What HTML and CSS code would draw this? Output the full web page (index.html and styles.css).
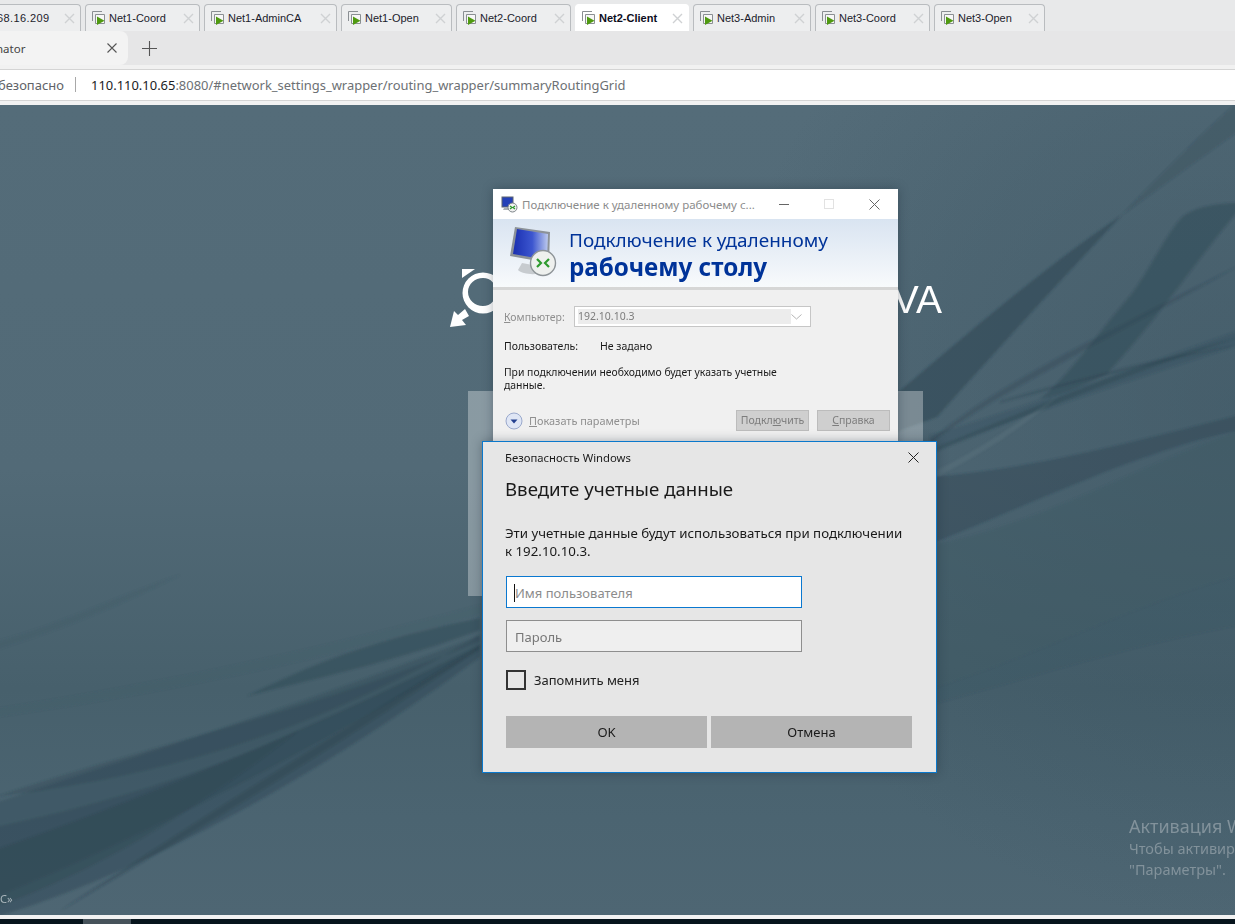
FILE: index.html
```html
<!DOCTYPE html>
<html lang="ru">
<head>
    <meta charset="UTF-8">
    <meta name="viewport" content="width=device-width, initial-scale=1.0">
    <title>Net2-Client</title>
    <link rel="stylesheet" href="styles.css">
</head>
<body>
    <svg width="0" height="0" class="defs">
        <defs>
            <g id="vm-icon">
                <path d="M1.5 11V1.5H11" fill="none" stroke="#8a8f93"/>
                <path d="M4.5 13.5V4.5H13.5V13.5Z" fill="#f7f7f7" stroke="#8a8f93"/>
                <path d="M6 6.5V15L13.5 10.8Z" fill="#4f9a10"/>
            </g>
            <g id="x-icon">
                <path d="M1 1L10 10M10 1L1 10" fill="none" stroke="#cfd1d3" stroke-width="1.4"/>
            </g>
        </defs>
    </svg>

    <!-- Workstation tabs -->
    <div class="tabstrip">
        <div class="tab tab-cut"><span class="tab-label">68.16.209</span><svg class="tab-x" width="11" height="11"><use href="#x-icon"/></svg></div>
        <div class="tab"><svg class="vm" width="16" height="16"><use href="#vm-icon"/></svg><span class="tab-label">Net1-Coord</span><svg class="tab-x" width="11" height="11"><use href="#x-icon"/></svg></div>
        <div class="tab"><svg class="vm" width="16" height="16"><use href="#vm-icon"/></svg><span class="tab-label">Net1-AdminCA</span><svg class="tab-x" width="11" height="11"><use href="#x-icon"/></svg></div>
        <div class="tab"><svg class="vm" width="16" height="16"><use href="#vm-icon"/></svg><span class="tab-label">Net1-Open</span><svg class="tab-x" width="11" height="11"><use href="#x-icon"/></svg></div>
        <div class="tab"><svg class="vm" width="16" height="16"><use href="#vm-icon"/></svg><span class="tab-label">Net2-Coord</span><svg class="tab-x" width="11" height="11"><use href="#x-icon"/></svg></div>
        <div class="tab tab-active"><svg class="vm" width="16" height="16"><use href="#vm-icon"/></svg><span class="tab-label">Net2-Client</span><svg class="tab-x" width="11" height="11"><use href="#x-icon"/></svg></div>
        <div class="tab"><svg class="vm" width="16" height="16"><use href="#vm-icon"/></svg><span class="tab-label">Net3-Admin</span><svg class="tab-x" width="11" height="11"><use href="#x-icon"/></svg></div>
        <div class="tab"><svg class="vm" width="16" height="16"><use href="#vm-icon"/></svg><span class="tab-label">Net3-Coord</span><svg class="tab-x" width="11" height="11"><use href="#x-icon"/></svg></div>
        <div class="tab"><svg class="vm" width="16" height="16"><use href="#vm-icon"/></svg><span class="tab-label">Net3-Open</span><svg class="tab-x" width="11" height="11"><use href="#x-icon"/></svg></div>
    </div>

    <!-- Browser tabs and address bar -->
    <div class="browser-tabs">
        <div class="browser-tab">
            <span class="browser-tab-label">nator</span>
            <svg width="10" height="10"><path d="M0.5 0.5L9.5 9.5M9.5 0.5L0.5 9.5" fill="none" stroke="#555" stroke-width="1.1"/></svg>
        </div>
        <svg class="new-tab" width="15" height="15"><path d="M7.5 0V15M0 7.5H15" fill="none" stroke="#555" stroke-width="1.1"/></svg>
    </div>
    <div class="toolbar">
        <div class="address">
            <span class="insecure">безопасно</span>
            <span class="divider"></span>
            <span class="url">110.110.10.65<span class="url-rest">:8080/#network_settings_wrapper/routing_wrapper/summaryRoutingGrid</span></span>
        </div>
    </div>

    <!-- Remote desktop -->
    <div class="desktop">
        <svg class="wallpaper" width="1235" height="810" viewBox="0 0 1235 810">
            <defs>
                <linearGradient id="wall" x1="0" y1="0" x2="0" y2="1">
                    <stop offset="0" stop-color="#546c79"/>
                    <stop offset="0.45" stop-color="#526a77"/>
                    <stop offset="0.72" stop-color="#47606c"/>
                    <stop offset="0.88" stop-color="#4b6471"/>
                    <stop offset="1" stop-color="#4e6673"/>
                </linearGradient>
                <radialGradient id="right-glow" gradientUnits="userSpaceOnUse" cx="1235" cy="300" r="520">
                    <stop offset="0" stop-color="#324b58" stop-opacity="0.4"/>
                    <stop offset="0.6" stop-color="#324b58" stop-opacity="0.2"/>
                    <stop offset="1" stop-color="#324b58" stop-opacity="0"/>
                </radialGradient>
                <filter id="soft">
                    <feGaussianBlur stdDeviation="1"/>
                </filter>
            </defs>
            <rect width="1235" height="810" fill="url(#wall)"/>
            <rect width="1235" height="810" fill="url(#right-glow)"/>
            <g filter="url(#soft)">
                <!-- left fan -->
                <path d="M-5 537C60 520 120 490 180 470C120 500 60 525 -5 545Z" fill="#3f5966" opacity="0.3"/>
                <path d="M-5 604C150 580 300 550 480 500V510C300 560 150 590 -5 612Z" fill="#3f5966" opacity="0.18"/>
                <path d="M480 513C400 530 340 545 247 591C330 570 400 555 480 525Z" fill="#2b4350" opacity="0.4"/>
                <path d="M480 530C330 590 170 640 -5 698V792C150 730 320 640 480 545Z" fill="#2b4350" opacity="0.32"/>
                <path d="M480 540C340 610 180 680 -5 745V812C140 770 320 670 480 552Z" fill="#2b4350" opacity="0.38"/>
                <path d="M480 536C300 610 150 640 -5 692C150 672 300 635 480 530Z" fill="#2b4350" opacity="0.3"/>
                <path d="M300 625C200 670 100 700 -5 722V802C90 770 190 710 300 625Z" fill="#2b4350" opacity="0.3"/>
                <path d="M480 540C400 590 250 680 60 806C260 690 400 600 480 543Z" fill="#263d4a" opacity="0.3"/>
                <!-- right fan -->
                <path d="M930 440C1040 420 1140 360 1240 325V470C1130 500 1040 550 930 584Z" fill="#3f5865" opacity="0.35"/>
                <path d="M930 584C1040 550 1130 500 1240 470V520C1130 540 1040 570 930 600Z" fill="#324b58" opacity="0.15"/>
                <path d="M860 320C960 235 1040 165 1122 110C1075 160 1010 230 937 312L860 340Z" fill="#2b4350" opacity="0.5"/>
                <path d="M1122 110C1160 70 1200 30 1240 -5V25C1190 60 1150 90 1122 110Z" fill="#2b4350" opacity="0.25"/>
                <path d="M1040 294C1070 270 1100 225 1130 191C1150 165 1165 130 1183 111C1200 100 1220 98 1240 98V104C1200 150 1165 205 1107 269C1085 280 1060 290 1040 294Z" fill="#2b4350" opacity="0.4"/>
                <path d="M930 330C1000 310 1100 275 1240 225V240C1100 285 1000 320 930 345Z" fill="#2b4350" opacity="0.22"/>
                <path d="M930 372C1030 365 1140 335 1240 310V325C1140 345 1030 400 930 439Z" fill="#2b4350" opacity="0.42"/>
                <path d="M930 345C1040 300 1130 260 1240 232C1130 268 1040 305 930 349Z" fill="#2b4350" opacity="0.4"/>
                <path d="M1000 296C1090 270 1170 250 1240 240C1170 254 1090 274 1000 298Z" fill="#2b4350" opacity="0.35"/>
                <path d="M930 335C1000 280 1060 250 1240 160C1070 256 1000 286 930 339Z" fill="#2b4350" opacity="0.3"/>
                <path d="M937 365C980 345 1020 315 1060 290C1020 325 980 350 937 372Z" fill="#7d939d" opacity="0.14"/>
            </g>
        </svg>

        <div class="logo">
            <svg width="46" height="62" viewBox="0 0 46 62">
                <path d="M12 4H25L12 13Z" fill="#fff"/>
                <path fill-rule="evenodd" d="M33 7.5A20.5 20.5 0 1 0 33 48.5A20.5 20.5 0 1 0 33 7.5ZM33 13C25 13 18 19 18 27C18 35 25 41 33 41C41 41 46 35 46 27C46 19 41 13 33 13Z" fill="#fff"/>
                <path d="M0 62L4 46L8 50L15 44L19 51L12 55L16 60Z" fill="#fff"/>
            </svg>
            <span class="logo-text">VA</span>
        </div>
        <div class="login-panel"></div>

        <p class="footer-note">С»</p>
        <div class="activation">
            <p class="activation-title">Активация Windows</p>
            <p>Чтобы активировать Windows, перейдите в раздел</p>
            <p>"Параметры".</p>
        </div>

        <!-- RDP client window -->
        <div class="window rdp">
            <div class="rdp-title">
                <svg width="17" height="17" viewBox="0 0 17 17">
                    <rect x="1" y="1" width="11" height="10" fill="#2440b8" stroke="#5d6570"/>
                    <path d="M3 12H10L11 14H2Z" fill="#aab0b5"/>
                    <circle cx="11.5" cy="11.5" r="4.5" fill="#f0f0f0" stroke="#7c8388"/>
                    <path d="M9 10L11 11.5L9 13M14 10L12 11.5L14 13" fill="none" stroke="#2e9a2e" stroke-width="1.2"/>
                </svg>
                <span class="rdp-title-text">Подключение к удаленному рабочему с...</span>
                <svg class="rdp-ctrl" width="10" height="10"><path d="M0 5.5H10" stroke="#666"/></svg>
                <svg class="rdp-ctrl" width="10" height="10"><rect x="0.5" y="0.5" width="9" height="9" fill="none" stroke="#e2e2e2"/></svg>
                <svg class="rdp-ctrl" width="11" height="11"><path d="M0.5 0.5L10.5 10.5M10.5 0.5L0.5 10.5" fill="none" stroke="#666"/></svg>
            </div>
            <div class="rdp-banner">
                <svg class="rdp-monitor" width="50" height="52" viewBox="0 0 50 52">
                    <defs>
                        <linearGradient id="screen" x1="0" y1="0" x2="1" y2="0">
                            <stop offset="0" stop-color="#1a2fb0"/>
                            <stop offset="0.55" stop-color="#3c56cf"/>
                            <stop offset="1" stop-color="#bcc9ee"/>
                        </linearGradient>
                    </defs>
                    <path d="M7 1L42 6L41 37L2 30Z" fill="#8c9298"/>
                    <path d="M9 3L40 8L39 34L5 28Z" fill="url(#screen)"/>
                    <path d="M14 37L30 40L34 46C28 50 14 48 10 44Z" fill="#c7cbcf"/>
                    <circle cx="35" cy="37" r="12.5" fill="#eef0ee" stroke="#8e9498" stroke-width="1.4"/>
                    <path d="M29 33L33 37L29 41M41 33L37 37L41 41" fill="none" stroke="#2e9a2e" stroke-width="2.2"/>
                </svg>
                <div class="rdp-heading">
                    <div class="rdp-heading-top">Подключение к удаленному</div>
                    <div class="rdp-heading-bold">рабочему столу</div>
                </div>
            </div>
            <div class="rdp-body">
                <div class="rdp-row">
                    <span class="rdp-label"><u>К</u>омпьютер:</span>
                    <div class="rdp-combo">
                        <span class="rdp-combo-value">192.10.10.3</span>
                        <svg width="11" height="6"><path d="M0.5 0.5L5.5 5L10.5 0.5" fill="none" stroke="#b5b5b5"/></svg>
                    </div>
                </div>
                <div class="rdp-user"><span class="rdp-user-label">Пользователь:</span><span>Не задано</span></div>
                <p class="rdp-note">При подключении необходимо будет указать учетные<br>данные.</p>
                <div class="rdp-actions">
                    <svg class="rdp-more" width="18" height="18" viewBox="0 0 18 18">
                        <circle cx="9" cy="9" r="8" fill="#dfe6f5" stroke="#9aa9cc"/>
                        <path d="M5.5 7.5H12.5L9 11.5Z" fill="#24408f"/>
                    </svg>
                    <span class="rdp-options"><u>П</u>оказать параметры</span>
                    <span class="rdp-button rdp-connect">Подкл<u>ю</u>чить</span>
                    <span class="rdp-button"><u>С</u>правка</span>
                </div>
            </div>
        </div>

        <!-- Windows credentials dialog -->
        <div class="window creds">
            <div class="creds-title">
                <span>Безопасность Windows</span>
                <svg width="11" height="11"><path d="M0.5 0.5L10.5 10.5M10.5 0.5L0.5 10.5" fill="none" stroke="#222"/></svg>
            </div>
            <h1 class="creds-heading">Введите учетные данные</h1>
            <p class="creds-text">Эти учетные данные будут использоваться при подключении<br>к 192.10.10.3.</p>
            <div class="field field-focus"><span class="caret"></span>Имя пользователя</div>
            <div class="field">Пароль</div>
            <div class="remember"><span class="checkbox"></span>Запомнить меня</div>
            <div class="creds-buttons">
                <div class="creds-button">OK</div>
                <div class="creds-button">Отмена</div>
            </div>
        </div>
    </div>

    <!-- Bottom of the host screen -->
    <div class="host-strip"></div>
    <div class="host-taskbar"><span class="host-task"></span></div>
</body>
</html>
```

FILE: styles.css
```css
/* Basic resets */
* {
    margin: 0;
    padding: 0;
    box-sizing: border-box;
}

body {
    width: 1235px;
    height: 924px;
    display: flex;
    flex-direction: column;
    overflow: hidden;
    background: #f1f1f1;
    font-family: "Noto Sans", sans-serif;
}

.defs {
    position: absolute;
}

/* Workstation tabs */
.tabstrip {
    height: 31px;
    flex: none;
    display: grid;
    grid-template-columns: 81px 115px 133px 111px 115px 114px 118px 115px 111px;
    gap: 4px;
    padding-top: 4px;
    background: #e8e9ea;
    font-family: "Liberation Sans", sans-serif;
    font-size: 11px;
    color: #1c1c2c;
}

.tab {
    display: flex;
    align-items: center;
    padding: 0 5px 0 5px;
    background: #edeeef;
    border: 1px solid #b9bcbf;
    border-bottom: none;
    border-radius: 4px 4px 0 0;
}

.tab-cut {
    padding-left: 0;
    border-left: none;
    border-radius: 0 4px 0 0;
}

.tab-cut .tab-label {
    margin-left: -3px;
    letter-spacing: 0.4px;
}

.tab-active {
    background: #fff;
    border-color: #fff;
    font-weight: bold;
    color: #0c0c1c;
}

.vm {
    margin-right: 2px;
    flex: none;
}

.tab-x {
    margin-left: auto;
    flex: none;
}

/* Browser chrome */
.browser-tabs {
    height: 34px;
    flex: none;
    display: flex;
    align-items: center;
    background: #e6e6e7;
}

.browser-tab {
    width: 128px;
    height: 100%;
    display: flex;
    align-items: center;
    justify-content: space-between;
    padding-right: 11px;
    background: #f3f3f3;
    border-radius: 0 8px 8px 0;
    font-size: 11.5px;
    color: #444;
}

.browser-tab-label {
    margin-left: -4px;
}

.new-tab {
    margin-left: 14px;
}

.toolbar {
    height: 40px;
    flex: none;
    padding-top: 4px;
    background: #f1f1f1;
}

.address {
    height: 32px;
    display: flex;
    align-items: center;
    padding-bottom: 1px;
    background: #fff;
    border-top: 1px solid #d4d4d4;
    border-bottom: 1px solid #d4d4d4;
    font-size: 12.95px;
    white-space: nowrap;
}

.insecure {
    width: 77px;
    margin-left: -2px;
    color: #5f6368;
}

.divider {
    width: 1px;
    height: 15px;
    margin: 0 15px 0 0;
    background: #a8a8a8;
}

.url {
    color: #202124;
}

.url-rest {
    color: #6c7074;
}

/* Remote desktop */
.desktop {
    flex: 1;
    position: relative;
    overflow: hidden;
    background: #4a626e;
}

.wallpaper {
    position: absolute;
    left: 0;
    top: 0;
}

.logo {
    position: absolute;
    left: 450px;
    top: 160px;
    width: 492px;
    display: flex;
    justify-content: space-between;
    align-items: center;
}

.logo-text {
    font-family: "Liberation Sans", sans-serif;
    font-size: 39px;
    color: #fff;
    margin-top: 8px;
}

.login-panel {
    position: absolute;
    left: 468px;
    top: 286px;
    width: 455px;
    height: 205px;
    background: rgba(255, 255, 255, 0.32);
}

.footer-note {
    position: absolute;
    left: 0;
    top: 786px;
    font-size: 11px;
    color: #a9b5bb;
}

.activation {
    position: absolute;
    left: 1129px;
    top: 709px;
    width: 400px;
    font-size: 14.5px;
    line-height: 21px;
    color: #82929b;
}

.activation-title {
    font-size: 18px;
    line-height: 24px;
}

/* RDP client window */
.window {
    position: absolute;
    box-shadow: 0 0 10px rgba(20, 35, 45, 0.35);
}

.rdp {
    left: 493px;
    top: 84px;
    width: 405px;
    height: 260px;
    background: #f0f0f0;
}

.rdp-title {
    height: 30px;
    display: flex;
    align-items: center;
    padding-left: 8px;
    background: #fff;
    font-size: 11.5px;
    color: #8c8c8c;
}

.rdp-title-text {
    width: 257px;
    margin-left: 4px;
    white-space: nowrap;
}

.rdp-ctrl {
    margin-right: 35px;
}

.rdp-ctrl:last-child {
    margin-right: 0;
}

.rdp-banner {
    height: 71px;
    display: flex;
    padding: 7px 0 0 15px;
    background: linear-gradient(#d9e4f1, #f8fafc);
    border-bottom: 3px solid #d6d6d6;
}

.rdp-monitor {
    flex: none;
}

.rdp-heading {
    margin-left: 11px;
    color: #003399;
    white-space: nowrap;
}

.rdp-heading-top {
    font-size: 18.95px;
    line-height: 28px;
}

.rdp-heading-bold {
    font-size: 24.2px;
    line-height: 25px;
    font-weight: bold;
}

.rdp-body {
    padding: 16px 8px 0 11px;
    font-size: 10.5px;
    color: #1a1a1a;
}

.rdp-row {
    display: flex;
    align-items: center;
    height: 21px;
}

.rdp-label {
    width: 70px;
    color: #8f8f8f;
}

.rdp-combo {
    width: 237px;
    height: 21px;
    display: flex;
    align-items: center;
    justify-content: space-between;
    padding: 0 8px 0 3px;
    background: #fff;
    border: 1px solid #c6c6c6;
}

.rdp-combo-value {
    width: 214px;
    height: 15px;
    line-height: 15px;
    background: #ececec;
    color: #7c7c7c;
}

.rdp-user {
    display: flex;
    margin-top: 12px;
    line-height: 15px;
}

.rdp-user-label {
    width: 96px;
}

.rdp-note {
    margin-top: 12px;
    line-height: 13px;
    font-size: 10.4px;
}

.rdp-actions {
    display: flex;
    align-items: center;
    margin-top: 18px;
    height: 21px;
}

.rdp-more {
    margin-left: 1px;
}

.rdp-options {
    flex: 1;
    margin-left: 6px;
    font-size: 10.9px;
    color: #8f8f8f;
}

.rdp-button {
    width: 73px;
    height: 21px;
    line-height: 19px;
    text-align: center;
    background: #cfcfcf;
    border: 1px solid #bcbcbc;
    color: #7d7d7d;
}

.rdp-connect {
    margin-right: 8px;
}

/* Windows credentials dialog */
.creds {
    left: 482px;
    top: 336px;
    width: 455px;
    height: 332px;
    padding: 0 24px 0 22px;
    background: #e6e6e6;
    border: 1px solid #0a78cc;
    color: #1a1a1a;
}

.creds-title {
    display: flex;
    justify-content: space-between;
    align-items: center;
    height: 31px;
    margin-right: -7px;
    font-size: 11.3px;
}

.creds-heading {
    margin-top: 3px;
    font-size: 18.65px;
    line-height: 26px;
    font-weight: normal;
}

.creds-text {
    margin-top: 22px;
    font-size: 13.3px;
    line-height: 18px;
}

.field {
    width: 296px;
    height: 32px;
    margin-top: 12px;
    margin-left: 1px;
    display: flex;
    align-items: center;
    padding: 1px 0 0 8px;
    background: #efefef;
    border: 1px solid #8e8e8e;
    font-size: 13px;
    color: #777;
}

.field-focus {
    position: relative;
    margin-top: 16px;
    background: #fff;
    border-color: #0a78d0;
    color: #8c8c8c;
}

.caret {
    position: absolute;
    left: 7px;
    top: 7px;
    width: 1px;
    height: 18px;
    background: #111;
}

.remember {
    display: flex;
    align-items: center;
    height: 20px;
    margin-top: 18px;
    margin-left: 1px;
    padding-bottom: 1px;
    font-size: 13px;
    color: #222;
}

.checkbox {
    width: 20px;
    height: 20px;
    flex: none;
    margin-right: 8px;
    border: 2px solid #333;
}

.creds-buttons {
    display: grid;
    grid-template-columns: 201px 201px;
    gap: 4px;
    margin-top: 26px;
    margin-left: 1px;
}

.creds-button {
    height: 32px;
    line-height: 32px;
    text-align: center;
    background: #b4b4b4;
    font-size: 13px;
    color: #1a1a1a;
}

/* Bottom of the host screen */
.host-strip {
    height: 4px;
    flex: none;
    background: #f2f2f2;
}

.host-taskbar {
    height: 5px;
    flex: none;
    background: #06141c;
}

.host-task {
    display: block;
    width: 48px;
    height: 5px;
    margin-left: 83px;
    background: #46525a;
}
```
